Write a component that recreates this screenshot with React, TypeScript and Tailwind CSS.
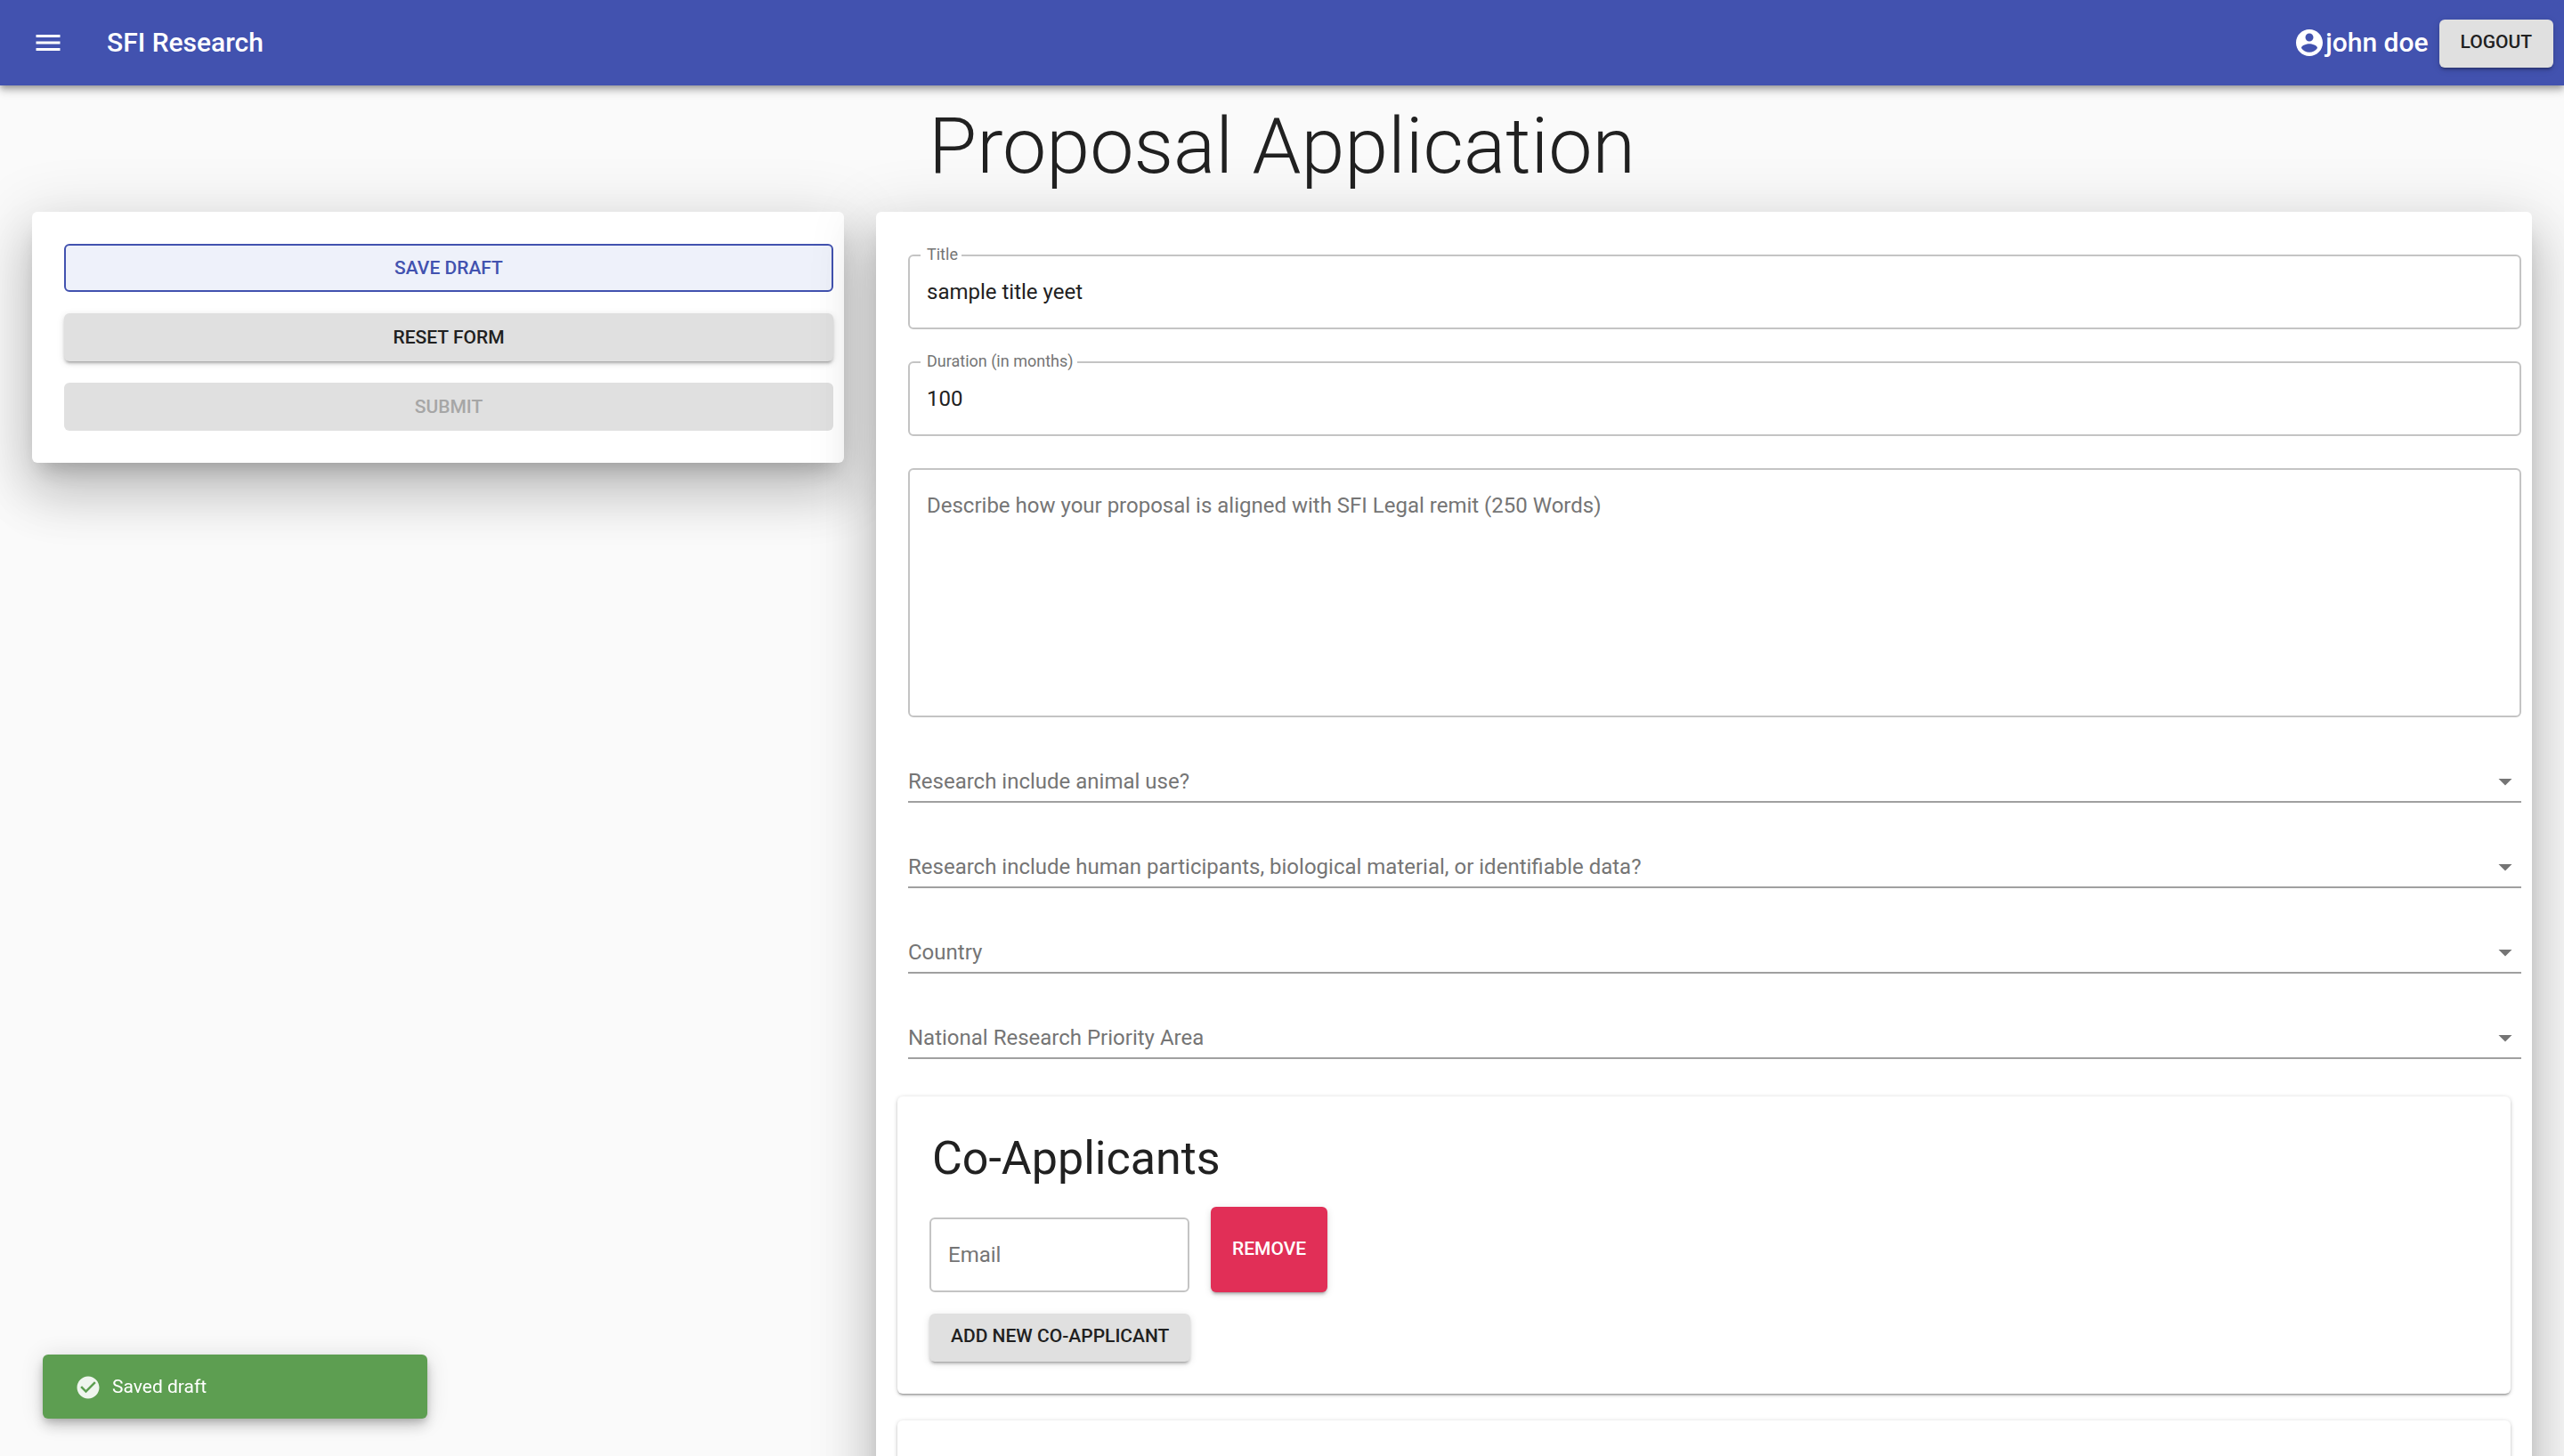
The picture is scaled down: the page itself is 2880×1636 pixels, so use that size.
import type { ReactNode } from "react";

const raised =
  "rounded-md font-medium text-[21px] leading-9 uppercase shadow-[0_4px_2px_-3px_rgba(0,0,0,0.2),0_3px_3px_0_rgba(0,0,0,0.14),0_2px_8px_0_rgba(0,0,0,0.12)]";

function Icon({ d, className }: { d: string; className: string }) {
  return (
    <svg viewBox="0 0 24 24" fill="currentColor" aria-hidden="true" className={className}>
      <path d={d} />
    </svg>
  );
}

function FilledField({ id, label, value }: { id: string; label: string; value: string }) {
  return (
    <div className="relative">
      <input
        id={id}
        type="text"
        defaultValue={value}
        className="block h-21 w-full rounded-md border-2 border-[#c4c4c4] px-[19px] text-2xl text-[#212121] outline-none"
      />
      <label
        htmlFor={id}
        className="absolute -top-3 left-3.5 bg-white pr-1 pl-[7px] text-[18px] leading-6 text-[#757575]"
      >
        {label}
      </label>
    </div>
  );
}

function SelectField({ id, label, options }: { id: string; label: string; options: string[] }) {
  return (
    <div className="relative">
      <select
        id={id}
        defaultValue=""
        className="block h-12 w-full appearance-none border-b-2 border-[#a0a0a0] bg-transparent text-2xl text-[#212121] outline-none"
      >
        <option value=""></option>
        {options.map((option) => (
          <option key={option}>{option}</option>
        ))}
      </select>
      <label
        htmlFor={id}
        className="pointer-events-none absolute top-0 left-0 text-2xl leading-12 text-[#757575]"
      >
        {label}
      </label>
      <Icon
        d="M7 10l5 5 5-5z"
        className="pointer-events-none absolute top-1.5 right-0 size-9 text-[#757575]"
      />
    </div>
  );
}

function Section({ children }: { children?: ReactNode }) {
  return (
    <section className="mx-6 min-h-36 rounded-md bg-white p-9 shadow-[0_3px_2px_-2px_rgba(0,0,0,0.2),0_2px_2px_0_rgba(0,0,0,0.14),0_1px_5px_0_rgba(0,0,0,0.2)]">
      {children}
    </section>
  );
}

const paper =
  "rounded-md bg-white shadow-[0_16px_22px_-10px_rgba(0,0,0,0.2),0_36px_57px_4px_rgba(0,0,0,0.14),0_14px_69px_12px_rgba(0,0,0,0.12)]";

export default function App() {
  return (
    <div className="flex h-screen flex-col overflow-hidden bg-[#fafafa] font-['Roboto',sans-serif] text-[#212121]">
      <header className="relative z-10 flex h-24 shrink-0 items-center bg-[#4252af] pr-3 pl-9 text-white shadow-[0_3px_6px_-1px_rgba(0,0,0,0.24),0_6px_8px_0_rgba(0,0,0,0.16),0_2px_15px_0_rgba(0,0,0,0.12)]">
        <button type="button" aria-label="Open menu" className="mr-12">
          <Icon d="M3 18h18v-2H3v2zm0-5h18v-2H3v2zm0-7v2h18V6H3z" className="size-9" />
        </button>
        <div className="grow text-3xl font-medium">SFI Research</div>
        <Icon
          d="M12 2C6.48 2 2 6.48 2 12s4.48 10 10 10 10-4.48 10-10S17.52 2 12 2zm0 3c1.66 0 3 1.34 3 3s-1.34 3-3 3-3-1.34-3-3 1.34-3 3-3zm0 14.2c-2.5 0-4.71-1.28-6-3.22.03-1.99 4-3.08 6-3.08 1.99 0 5.97 1.09 6 3.08-1.29 1.94-3.5 3.22-6 3.22z"
          className="size-9"
        />
        <span className="mr-3 text-3xl font-medium">john doe</span>
        <button
          type="button"
          className={`${raised} mt-0.5 bg-[#e0e0e0] px-6 pt-[7px] pb-[11px] text-[#212121]`}
        >
          Logout
        </button>
      </header>

      <h1 className="mt-[14px] mb-5 text-center text-[88px] leading-[108px] font-light">
        Proposal Application
      </h1>

      <main className="grid grid-cols-3 items-start gap-9 px-9">
        <div className={`${paper} flex flex-col gap-6 py-9 pr-3 pl-9`}>
          <button
            type="button"
            className="rounded-md border-2 border-[#4252af] bg-[#eef1fa] py-[7px] text-[21px] leading-9 font-medium text-[#4252af] uppercase"
          >
            Save draft
          </button>
          <button type="button" className={`${raised} bg-[#e0e0e0] py-[9px]`}>
            Reset form
          </button>
          <button
            type="button"
            disabled
            className="rounded-md bg-[#e0e0e0] py-[9px] text-[21px] leading-9 font-medium text-[#a6a6a6] uppercase"
          >
            Submit
          </button>
        </div>

        <form className={`${paper} col-span-2 pt-12 pb-9`}>
          <div className="mb-[42px] flex flex-col gap-9 pr-3 pl-9">
            <FilledField id="title" label="Title" value="sample title yeet" />
            <FilledField id="duration" label="Duration (in months)" value="100" />
            <div className="relative">
              <textarea
                id="remit"
                className="block h-70 w-full resize-none rounded-md border-2 border-[#c4c4c4] px-[19px] py-6 text-2xl outline-none"
              />
              <label
                htmlFor="remit"
                className="pointer-events-none absolute top-0 left-[21px] text-2xl leading-21 text-[#757575]"
              >
                Describe how your proposal is aligned with SFI Legal remit (250 Words)
              </label>
            </div>
            <div className="flex flex-col gap-12 pt-3">
              <SelectField id="animal" label="Research include animal use?" options={["Yes", "No"]} />
              <SelectField
                id="human"
                label="Research include human participants, biological material, or identifiable data?"
                options={["Yes", "No"]}
              />
              <SelectField id="country" label="Country" options={["Ireland"]} />
              <SelectField id="area" label="National Research Priority Area" options={["Other"]} />
            </div>
          </div>

          <div className="flex flex-col gap-[30px]">
            <Section>
              <h2 className="ml-[3px] pt-0.5 text-[52px] leading-16">Co-Applicants</h2>
              <div className="mt-[22px] mb-6 flex items-end gap-6">
                <div className="relative">
                  <input
                    id="email"
                    type="email"
                    className="block h-21 w-73 rounded-md border-2 border-[#c4c4c4] px-[19px] text-2xl outline-none"
                  />
                  <label
                    htmlFor="email"
                    className="pointer-events-none absolute top-0 left-[21px] text-2xl leading-21 text-[#757575]"
                  >
                    Email
                  </label>
                </div>
                <button type="button" className={`${raised} h-24 bg-[#e12f57] px-6 pb-0.5 text-white`}>
                  Remove
                </button>
              </div>
              <button type="button" className={`${raised} block bg-[#e0e0e0] px-6 pt-[7px] pb-[11px]`}>
                Add new co-applicant
              </button>
            </Section>
            <Section />
          </div>
        </form>
      </main>

      <div
        role="status"
        className="fixed bottom-[42px] left-12 z-20 flex h-18 w-108 items-center gap-3 rounded-md bg-[#5d9e51] px-9 pt-0.5 text-[21px] text-white shadow-[0_4px_8px_-2px_rgba(0,0,0,0.2),0_9px_15px_0_rgba(0,0,0,0.14),0_2px_27px_0_rgba(0,0,0,0.12)]"
      >
        <Icon
          d="M12 2C6.5 2 2 6.5 2 12S6.5 22 12 22 22 17.5 22 12 17.5 2 12 2M10 17L5 12L6.41 10.59L10 14.17L17.59 6.58L19 8L10 17Z"
          className="size-[30px] opacity-90"
        />
        Saved draft
      </div>
    </div>
  );
}
